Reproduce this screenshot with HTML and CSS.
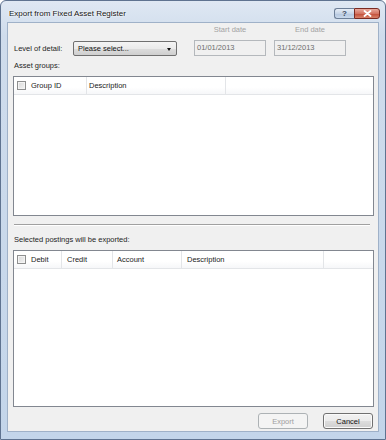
FILE: index.html
```html
<!DOCTYPE html>
<html>
<head>
<meta charset="utf-8">
<link rel="stylesheet" href="styles.css">
</head>
<body>
<div class="window">
  <div class="titlebar">
    <span class="title">Export from Fixed Asset Register</span>
    <div class="caption-btns">
      <div class="cbtn help">?</div>
      <div class="cbtn close">
        <svg width="9" height="7" viewBox="0 0 9 7"><path d="M1.5 1 L7.5 6 M7.5 1 L1.5 6" stroke="#fff" stroke-width="1.8" stroke-linecap="round"/></svg>
      </div>
    </div>
  </div>
  <div class="client">
    <div class="top-row">
      <label class="lvl-label">Level of detail:</label>
      <div class="select"><span>Please select...</span><span class="arrow"></span></div>
      <div class="date-field first">
        <div class="date-label">Start date</div>
        <div class="date-input">01/01/2013</div>
      </div>
      <div class="date-field">
        <div class="date-label">End date</div>
        <div class="date-input">31/12/2013</div>
      </div>
    </div>
    <div class="section-label">Asset groups:</div>
    <div class="listview lv1">
      <div class="lv-header">
        <div class="col g1"><span class="chk"></span>Group ID</div>
        <div class="col g2">Description</div>
        <div class="col fill"></div>
      </div>
    </div>
    <div class="separator"></div>
    <div class="section-label second">Selected postings will be exported:</div>
    <div class="listview lv2">
      <div class="lv-header">
        <div class="col p1"><span class="chk"></span>Debit</div>
        <div class="col p2">Credit</div>
        <div class="col p3">Account</div>
        <div class="col p4">Description</div>
        <div class="col fill"></div>
      </div>
    </div>
    <div class="buttons">
      <div class="btn disabled">Export</div>
      <div class="btn">Cancel</div>
    </div>
  </div>
</div>
</body>
</html>
```
FILE: styles.css
```css
* { box-sizing: border-box; }
html, body { margin: 0; padding: 0; background: #fff; }
body {
  font-family: "Liberation Sans", Arial, sans-serif;
  font-size: 7.5px;
  color: #1e1e1e;
}
.window {
  width: 386px;
  height: 440px;
  border: 1px solid #5f7390;
  border-radius: 6px 6px 0 0;
  background: linear-gradient(180deg, #dfe8f3 0%, #cfdcec 8%, #c3d5ea 100%);
  display: flex;
  flex-direction: column;
}
.titlebar {
  height: 21px;
  display: flex;
  align-items: flex-start;
  padding-left: 8px;
}
.title {
  font-size: 8px;
  color: #141414;
  margin-top: 8px;
  text-shadow: 0 0 3px #fff, 0 0 2px #fff;
}
.caption-btns {
  margin-left: auto;
  margin-right: 5px;
  margin-top: 7px;
  display: flex;
  height: 11px;
}
.cbtn {
  height: 11px;
  border: 1px solid #6d7f98;
  display: flex;
  align-items: center;
  justify-content: center;
}
.help {
  width: 20px;
  border-radius: 3px 0 0 3px;
  border-right: none;
  background: linear-gradient(180deg, #e6edf6 0%, #c7d5e7 50%, #b4c6de 51%, #c9d9ec 100%);
  font-size: 8px;
  font-weight: bold;
  color: #3b4a5e;
  line-height: 9px;
}
.close {
  width: 26px;
  border-radius: 0 3px 3px 0;
  border-color: #7a2a22;
  background: linear-gradient(180deg, #e9a99c 0%, #d47462 50%, #c14a35 51%, #d8826a 100%);
}
.client {
  margin: 0 6px 7px 6px;
  height: 410px;
  border: 1px solid #9fb1c8;
  background: #f0f0f0;
  display: flex;
  flex-direction: column;
}
.top-row {
  margin-top: 2px;
  height: 31px;
  display: flex;
  align-items: flex-end;
}
.lvl-label {
  width: 59px;
  margin-left: 6px;
  line-height: 15px;
  height: 15px;
}
.select {
  width: 104px;
  height: 15px;
  border: 1px solid #707070;
  border-radius: 2px;
  background: linear-gradient(180deg, #f4f4f4 0%, #ebebeb 50%, #dddddd 51%, #cfcfcf 100%);
  display: flex;
  align-items: center;
  padding-left: 4px;
  color: #111;
}
.arrow {
  margin-left: auto;
  margin-right: 5px;
  width: 0;
  height: 0;
  border-left: 2.5px solid transparent;
  border-right: 2.5px solid transparent;
  border-top: 3px solid #111;
  margin-top: 1px;
}
.date-field {
  width: 72px;
  margin-left: 8px;
  display: flex;
  flex-direction: column;
  align-items: center;
}
.date-field.first { margin-left: 17px; }
.date-label {
  line-height: 10px;
  height: 10px;
  margin-bottom: 5px;
  color: #a3a3a3;
}
.date-input {
  width: 72px;
  height: 16px;
  border: 1px solid #b4b8bc;
  background: #f0f0f0;
  color: #6d6d6d;
  padding-left: 2px;
  line-height: 13px;
}
.section-label {
  margin-top: 5px;
  margin-left: 6px;
  line-height: 10px;
  height: 10px;
}
.section-label.second { margin-top: 9px; }
.listview {
  margin: 5px 4px 0 5px;
  border: 1px solid #828790;
  background: #fff;
}
.lv1 { height: 140px; }
.lv2 { height: 157px; }
.lv-header {
  height: 18px;
  display: flex;
  background: linear-gradient(180deg, #ffffff 0%, #ffffff 60%, #f6f7f9 100%);
  border-bottom: 1px solid #e3e5e8;
}
.col {
  height: 100%;
  display: flex;
  align-items: center;
  border-right: 1px solid #e3e5e8;
  color: #222;
}
.col.fill { flex: 1; border-right: none; }
.chk {
  width: 9px;
  height: 9px;
  border: 1px solid #8e8f8f;
  background: linear-gradient(135deg, #d9d9d9 0%, #f4f4f4 100%);
  margin-left: 3px;
  margin-right: 5px;
  box-shadow: inset 0 0 0 1px #f4f4f4;
}
.g1 { width: 73px; }
.g2 { width: 139px; padding-left: 2px; }
.p1 { width: 48px; }
.p2 { width: 51px; padding-left: 5px; }
.p3 { width: 69px; padding-left: 4px; }
.p4 { width: 142px; padding-left: 5px; }
.separator {
  margin: 8px 8px 0 6px;
  height: 2px;
  border-top: 1px solid #a0a0a0;
  border-bottom: 1px solid #ffffff;
}
.buttons {
  margin-top: 6px;
  margin-right: 5px;
  display: flex;
  justify-content: flex-end;
  gap: 15px;
}
.btn {
  width: 50px;
  height: 16px;
  border: 1px solid #707070;
  border-radius: 3px;
  background: linear-gradient(180deg, #f2f2f2 0%, #ebebeb 50%, #dddddd 51%, #cfcfcf 100%);
  display: flex;
  align-items: center;
  justify-content: center;
  color: #111;
  box-shadow: inset 0 0 0 1px #fafafa;
}
.btn.disabled {
  border-color: #adb2b5;
  background: #f4f4f4;
  color: #a0a0a0;
  box-shadow: none;
}
```
